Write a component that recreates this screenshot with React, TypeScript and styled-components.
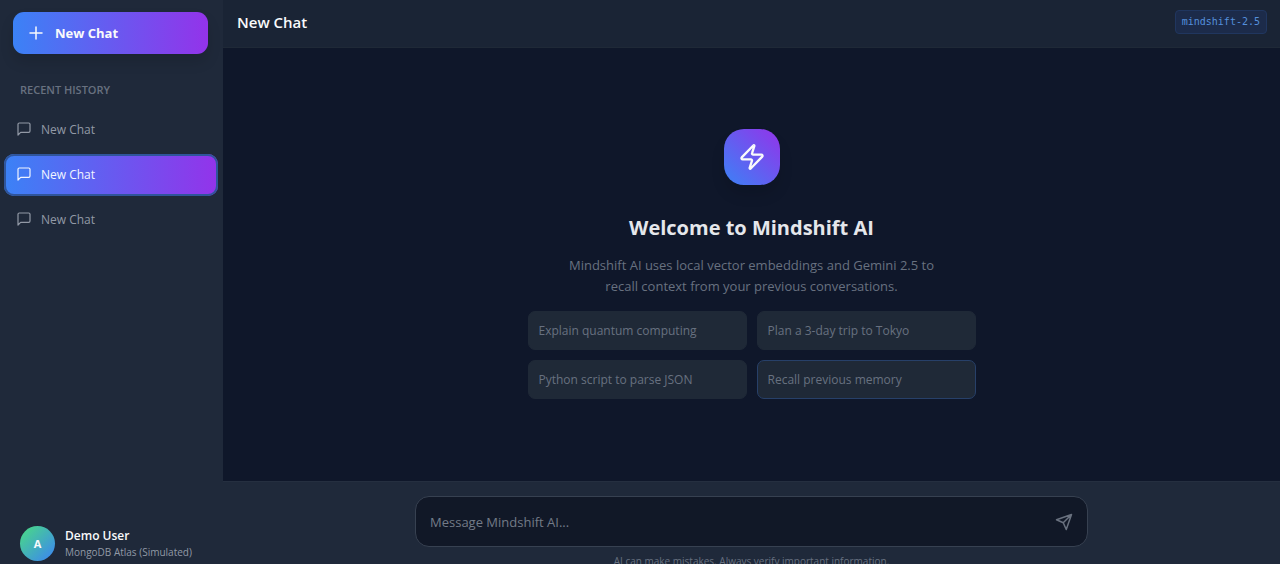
import React from "react";
import styled, { createGlobalStyle } from "styled-components";

const GlobalStyle = createGlobalStyle`
  *, *::before, *::after { box-sizing: border-box; }
  body {
    margin: 0;
    overflow: hidden;
    background: #0f172a;
    font-family: "Open Sans", "Noto Sans", sans-serif;
    color: #f9fafb;
  }
  button, input { font: inherit; color: inherit; }
  h1, h2, h3, p, ul { margin: 0; padding: 0; }
`;

const Shell = styled.div`
  display: flex;
  height: calc(100vh + 14px);
`;

const Sidebar = styled.aside`
  display: flex;
  flex-direction: column;
  flex: 0 0 223px;
  background: #1f293a;
`;

const NewChatButton = styled.button`
  display: flex;
  align-items: center;
  gap: 10px;
  height: 42px;
  margin: 12px 15px 0 13px;
  padding: 0 14px;
  border: 0;
  border-radius: 11px;
  background: linear-gradient(to right, #3b82f6, #9333ea);
  box-shadow: 0 8px 14px rgba(0, 0, 0, 0.12);
  font-size: 13px;
  font-weight: 700;
  cursor: pointer;
`;

const SectionTitle = styled.h3`
  margin: 28px 20px 0;
  font-size: 11px;
  line-height: 16px;
  font-weight: 600;
  text-transform: uppercase;
  color: #687180;
`;

const HistoryList = styled.ul`
  display: flex;
  flex-direction: column;
  gap: 3px;
  margin: 11px 5px 0 4px;
  list-style: none;
`;

const HistoryButton = styled.button<{ $active?: boolean }>`
  display: flex;
  align-items: center;
  gap: 9px;
  width: 100%;
  height: 42px;
  padding: 0 12px 2px;
  border: 0;
  border-radius: 10px;
  font-size: 12px;
  text-align: left;
  cursor: pointer;
  color: ${(p) => (p.$active ? "#f1f5ff" : "#9299a6")};
  font-weight: ${(p) => (p.$active ? 500 : 400)};
  background: ${(p) => (p.$active ? "linear-gradient(to right, #3b82f6, #9333ea)" : "transparent")};
  box-shadow: ${(p) => (p.$active ? "inset 0 0 0 2px #2f559c" : "none")};
`;

const UserPanel = styled.div`
  display: flex;
  align-items: center;
  gap: 10px;
  margin-top: auto;
  padding: 17px 20px;
`;

const Avatar = styled.div`
  display: grid;
  place-items: center;
  width: 35px;
  height: 35px;
  border-radius: 50%;
  background: linear-gradient(to bottom right, #4ade80, #3b82f6);
  font-size: 11px;
  font-weight: 700;
`;

const UserName = styled.p`
  font-size: 12px;
  line-height: 16px;
  font-weight: 600;
`;

const UserDetail = styled.p`
  font-size: 10px;
  line-height: 16px;
  color: #9299a6;
  white-space: nowrap;
`;

const Main = styled.main`
  display: flex;
  flex: 1;
  flex-direction: column;
  min-width: 0;
`;

const Header = styled.header`
  display: flex;
  align-items: center;
  justify-content: space-between;
  height: 48px;
  padding: 0 13px 3px 14px;
  border-bottom: 1px solid #1f2937;
  background: #1a2435;
`;

const HeaderTitle = styled.h1`
  font-size: 15px;
  line-height: 20px;
  font-weight: 600;
`;

const ModelBadge = styled.span`
  padding: 3px 6px;
  border: 1px solid #20365f;
  border-radius: 4px;
  background: #1c2b4a;
  color: #5590dc;
  font-family: "DejaVu Sans Mono", monospace;
  font-size: 10px;
  line-height: 16px;
`;

const Welcome = styled.section`
  display: flex;
  flex: 1;
  flex-direction: column;
  align-items: center;
  justify-content: center;
  padding-bottom: 1px;
  background: #0f172a;
`;

const Logo = styled.div`
  display: grid;
  place-items: center;
  width: 56px;
  height: 56px;
  border-radius: 20px;
  background: linear-gradient(to top right, #3b82f6, #9333ea);
  box-shadow: 0 10px 14px rgba(0, 0, 0, 0.12);
`;

const WelcomeTitle = styled.h2`
  margin-top: 28px;
  font-size: 20px;
  line-height: 30px;
  font-weight: 700;
  color: #e5e7eb;
`;

const WelcomeText = styled.p`
  max-width: 390px;
  margin-top: 12px;
  font-size: 13px;
  line-height: 21px;
  text-align: center;
  color: #687180;
`;

const Suggestions = styled.div`
  display: grid;
  grid-template-columns: 1fr 1fr;
  gap: 10px;
  width: 100%;
  max-width: 448px;
  margin-top: 14px;
`;

const Suggestion = styled.button<{ $highlighted?: boolean }>`
  height: 39px;
  padding: 0 10px;
  border: 1px solid ${(p) => (p.$highlighted ? "#274069" : "#1f2937")};
  border-radius: 7px;
  background: #1f2937;
  color: #687180;
  font-size: 12px;
  text-align: left;
  cursor: pointer;
`;

const Footer = styled.footer`
  height: 97px;
  padding: 14px 16px;
  border-top: 1px solid #252f40;
  background: #1f293a;
`;

const Composer = styled.form`
  display: flex;
  align-items: center;
  height: 51px;
  max-width: 673px;
  margin: 0 auto;
  padding: 0 14px;
  border: 1px solid #374151;
  border-radius: 14px;
  background: #111827;
`;

const MessageInput = styled.input`
  flex: 1;
  min-width: 0;
  padding: 0;
  border: 0;
  outline: 0;
  background: transparent;
  font-size: 13px;
  &::placeholder { color: #737b88; opacity: 1; }
`;

const SendButton = styled.button`
  display: flex;
  padding: 0;
  border: 0;
  background: none;
  color: #69717f;
  cursor: pointer;
`;

const Disclaimer = styled.p`
  margin-top: 6px;
  font-size: 10px;
  line-height: 16px;
  text-align: center;
  color: #687180;
`;

type IconProps = { size: number; d: string; strokeWidth?: number };

const Icon = ({ size, d, strokeWidth = 2 }: IconProps) => (
  <svg
    width={size}
    height={size}
    viewBox="0 0 24 24"
    fill="none"
    stroke="currentColor"
    strokeWidth={strokeWidth}
    strokeLinecap="round"
    strokeLinejoin="round"
    aria-hidden="true"
  >
    <path d={d} />
  </svg>
);

const PLUS = "M4 12h16M12 4v16";
const MESSAGE = "M21 15a2 2 0 0 1-2 2H7l-4 4V5a2 2 0 0 1 2-2h14a2 2 0 0 1 2 2z";
const ZAP =
  "M4 14a1 1 0 0 1-.78-1.63l9.9-10.2a.5.5 0 0 1 .86.46l-1.92 6.02A1 1 0 0 0 13 10h7a1 1 0 0 1 .78 1.63l-9.9 10.2a.5.5 0 0 1-.86-.46l1.92-6.02A1 1 0 0 0 11 14z";
const SEND = "m22 2-7 20-4-9-9-4ZM22 2 11 13";

const chats = [
  { id: 1, title: "New Chat" },
  { id: 2, title: "New Chat" },
  { id: 3, title: "New Chat" },
];

const suggestions = [
  "Explain quantum computing",
  "Plan a 3-day trip to Tokyo",
  "Python script to parse JSON",
  "Recall previous memory",
];

export default function App() {
  const [activeId, setActiveId] = React.useState(2);
  const [message, setMessage] = React.useState("");

  return (
    <>
      <GlobalStyle />
      <Shell>
        <Sidebar>
          <NewChatButton type="button">
            <Icon size={18} d={PLUS} />
            New Chat
          </NewChatButton>
          <SectionTitle>Recent History</SectionTitle>
          <HistoryList>
            {chats.map((chat) => (
              <li key={chat.id}>
                <HistoryButton
                  type="button"
                  $active={chat.id === activeId}
                  onClick={() => setActiveId(chat.id)}
                >
                  <Icon size={16} d={MESSAGE} strokeWidth={1.8} />
                  {chat.title}
                </HistoryButton>
              </li>
            ))}
          </HistoryList>
          <UserPanel>
            <Avatar>A</Avatar>
            <div>
              <UserName>Demo User</UserName>
              <UserDetail>MongoDB Atlas (Simulated)</UserDetail>
            </div>
          </UserPanel>
        </Sidebar>
        <Main>
          <Header>
            <HeaderTitle>New Chat</HeaderTitle>
            <ModelBadge>mindshift-2.5</ModelBadge>
          </Header>
          <Welcome>
            <Logo>
              <Icon size={28} d={ZAP} />
            </Logo>
            <WelcomeTitle>Welcome to Mindshift AI</WelcomeTitle>
            <WelcomeText>
              Mindshift AI uses local vector embeddings and Gemini 2.5 to recall context from your
              previous conversations.
            </WelcomeText>
            <Suggestions>
              {suggestions.map((text, index) => (
                <Suggestion
                  key={text}
                  type="button"
                  $highlighted={index === 3}
                  onClick={() => setMessage(text)}
                >
                  {text}
                </Suggestion>
              ))}
            </Suggestions>
          </Welcome>
          <Footer>
            <Composer onSubmit={(e) => e.preventDefault()}>
              <MessageInput
                aria-label="Message Mindshift AI"
                placeholder="Message Mindshift AI..."
                value={message}
                onChange={(e) => setMessage(e.target.value)}
              />
              <SendButton type="submit" aria-label="Send message">
                <Icon size={18} d={SEND} />
              </SendButton>
            </Composer>
            <Disclaimer>AI can make mistakes. Always verify important information.</Disclaimer>
          </Footer>
        </Main>
      </Shell>
    </>
  );
}
